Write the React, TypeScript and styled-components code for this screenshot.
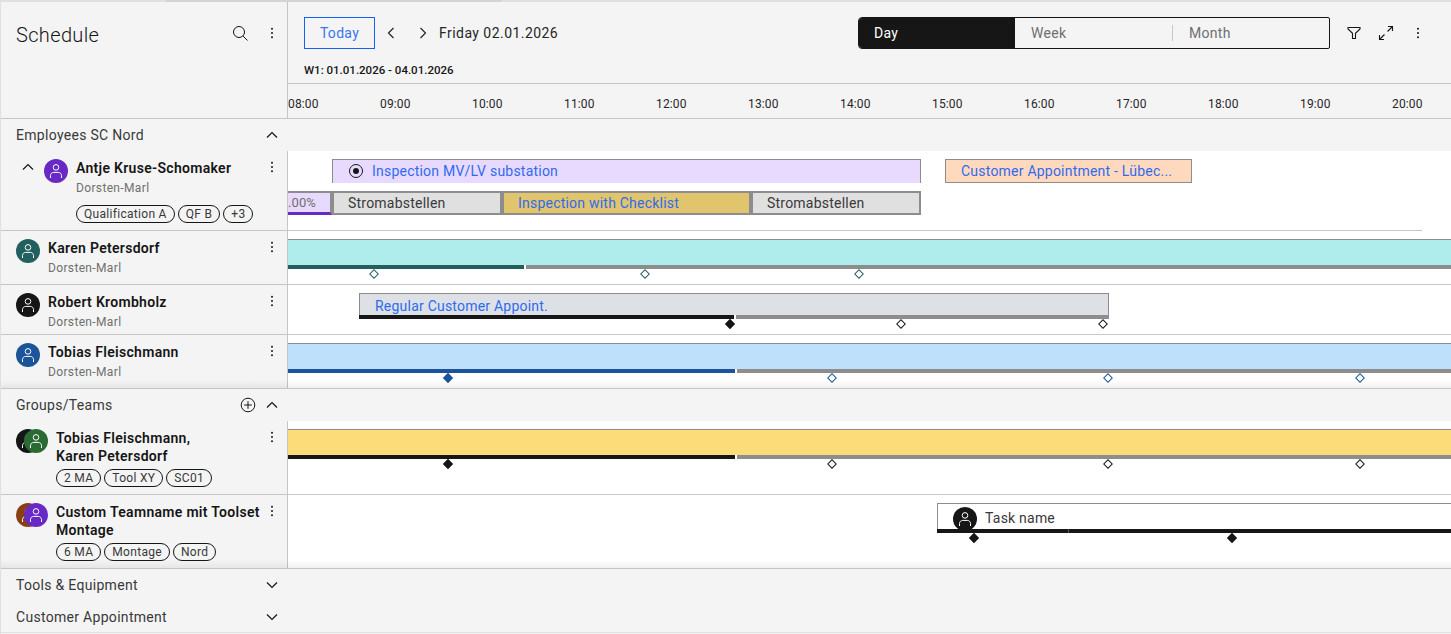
import React from "react";
import styled, { createGlobalStyle } from "styled-components";

const GlobalStyle = createGlobalStyle`
  html, body {
    margin: 0;
    padding: 0;
    background: #f4f4f4;
    overflow: hidden;
  }
  * {
    box-sizing: border-box;
  }
`;

const HOURS = ["08:00", "09:00", "10:00", "11:00", "12:00", "13:00", "14:00", "15:00", "16:00", "17:00", "18:00", "19:00", "20:00"];
const BLACK = "#161616";
const GRAY = "#8d8d8d";
const SIDE_W = 288;

const Page = styled.div`
  width: 1451px;
  height: 634px;
  overflow: hidden;
  display: flex;
  flex-direction: column;
  background: #f4f4f4;
  border-left: 1px solid #e0e0e0;
  font-family: Roboto, "Liberation Sans", sans-serif;
  letter-spacing: 0.3px;
  color: ${BLACK};
`;

const TopEdge = styled.div`
  height: 2px;
  flex: none;
  padding-left: 165px;
  background: #e0e0e0;
`;

const TopStrip = styled.div`
  width: 336px;
  height: 2px;
  background: #d4d4d4;
`;

const Header = styled.header`
  display: flex;
  height: 117px;
  flex: none;
  border-bottom: 1px solid #c6c6c6;
`;

const HeaderSide = styled.div`
  width: ${SIDE_W - 1}px;
  flex: none;
  display: flex;
  justify-content: space-between;
  align-items: flex-start;
  padding: 19px 3px 0 15px;
  border-right: 1px solid #c6c6c6;
`;

const Title = styled.h1`
  margin: 0;
  font-size: 20px;
  line-height: 28px;
  font-weight: 300;
  letter-spacing: 0.35px;
`;

const IconRow = styled.div<{ $ml?: number }>`
  display: flex;
  align-items: center;
  gap: 8px;
  margin-left: ${(p) => p.$ml ?? 0}px;
`;

const IconBtn = styled.span`
  width: 24px;
  height: 24px;
  display: flex;
  align-items: center;
  justify-content: center;
  flex: none;
  color: ${BLACK};
`;

const HeaderMain = styled.div`
  flex: 1;
  min-width: 0;
  display: flex;
  flex-direction: column;
`;

const Toolbar = styled.div`
  height: 82px;
  flex: none;
  border-bottom: 1px solid #c6c6c6;
  padding: 15px 21px 0 16px;
  display: flex;
  flex-direction: column;
`;

const ToolRow = styled.div`
  display: flex;
  align-items: center;
  height: 32px;
`;

const TodayBtn = styled.button`
  width: 71px;
  height: 32px;
  background: transparent;
  border: 1px solid #0f62fe;
  color: #3d75f0;
  font: inherit;
  font-size: 14px;
  letter-spacing: 0.3px;
  padding: 0;
`;

const Nav = styled.span`
  width: 32px;
  height: 32px;
  display: flex;
  align-items: center;
  justify-content: center;
  color: #262626;
`;

const DateLabel = styled.span`
  font-size: 14px;
  color: #262626;
  letter-spacing: 0.45px;
`;

const Switcher = styled.div`
  margin-left: auto;
  width: 472px;
  height: 32px;
  display: grid;
  grid-template-columns: 156px 157px 1fr;
  border: 1px solid ${BLACK};
  border-radius: 4px 2px 2px 4px;
  overflow: hidden;
  font-size: 14px;
`;

const SwitchItem = styled.div<{ $active?: boolean; $divider?: boolean }>`
  display: flex;
  align-items: center;
  padding-left: ${(p) => (p.$divider ? 17 : p.$active ? 15 : 16)}px;
  position: relative;
  background: ${(p) => (p.$active ? BLACK : "transparent")};
  color: ${(p) => (p.$active ? "#ffffff" : "#6f6f6f")};
  &::before {
    content: "";
    display: ${(p) => (p.$divider ? "block" : "none")};
    position: absolute;
    left: 0;
    top: 7px;
    bottom: 7px;
    width: 1px;
    background: #c6c6c6;
  }
`;

const WeekLabel = styled.div`
  font-size: 11.5px;
  font-weight: 500;
  line-height: 16px;
  margin-top: 13px;
  letter-spacing: 0;
`;

const HourRow = styled.div`
  flex: 1;
  display: grid;
  grid-template-columns: repeat(13, 92px);
  align-items: center;
  padding-top: 5px;
  font-size: 12px;
  letter-spacing: 0.15px;
  color: #262626;
`;

const SectionHead = styled.div<{ $last?: boolean }>`
  height: 32px;
  flex: none;
  display: flex;
  align-items: center;
  font-size: 14px;
  color: #393939;
  border-bottom: ${(p) => (p.$last ? "1px solid #e0e0e0" : "none")};
`;

const SectionInner = styled.div`
  width: ${SIDE_W - 1}px;
  display: flex;
  align-items: center;
  padding: 0 4px 0 15px;
`;

const SectionName = styled.span`
  flex: 1;
`;

const Rows = styled.div`
  flex: none;
  position: relative;
  border-bottom: 1px solid #c6c6c6;
  &::after {
    content: "";
    position: absolute;
    left: 0;
    right: 0;
    bottom: 0;
    height: 8px;
    background: linear-gradient(to bottom, rgba(0, 0, 0, 0), rgba(0, 0, 0, 0.06));
    pointer-events: none;
  }
`;

const Row = styled.div<{ $h: number; $line?: boolean }>`
  display: flex;
  height: ${(p) => p.$h}px;
  border-bottom: ${(p) => (p.$line ? "1px solid #c6c6c6" : "none")};
`;

const SideCell = styled.div<{ $line?: boolean }>`
  width: ${SIDE_W - 1}px;
  flex: none;
  display: flex;
  align-items: flex-start;
  border-right: 1px solid #c6c6c6;
  border-bottom: ${(p) => (p.$line ? "1px solid #c6c6c6" : "none")};
  padding: 8px 3px 0 15px;
  position: relative;
`;

const Kebabs = styled(IconBtn)`
  margin-top: -4px;
`;

const Chevron = styled.span`
  width: 24px;
  height: 24px;
  flex: none;
  display: flex;
  align-items: center;
  justify-content: center;
  margin-top: -4px;
  margin-right: 4px;
`;

const Avatar = styled.span<{ $color: string }>`
  width: 24px;
  height: 24px;
  border-radius: 50%;
  background: ${(p) => p.$color};
  color: #ffffff;
  display: flex;
  align-items: center;
  justify-content: center;
  flex: none;
`;

const TaskAvatar = styled(Avatar)`
  margin-top: 4px;
`;

const AvatarStack = styled.div`
  display: flex;
  flex: none;
  & > span + span {
    margin-left: -16px;
  }
`;

const Person = styled.div`
  flex: 1;
  min-width: 0;
  margin-left: 8px;
`;

const Name = styled.div`
  font-size: 14px;
  font-weight: 600;
  line-height: 18px;
  white-space: nowrap;
  letter-spacing: 0.3px;
`;

const Place = styled.div`
  font-size: 12px;
  line-height: 16px;
  color: #6f6f6f;
  margin-top: 3px;
  letter-spacing: 0.35px;
`;

const Chips = styled.div<{ $mt?: number }>`
  display: flex;
  gap: 3px;
  margin-top: ${(p) => p.$mt ?? 4}px;
`;

const Chip = styled.span`
  height: 18px;
  padding: 0 7px;
  border: 1px solid ${BLACK};
  border-radius: 9px;
  display: flex;
  align-items: center;
  font-size: 12px;
  letter-spacing: 0.3px;
  color: #393939;
  white-space: nowrap;
`;

const Track = styled.div`
  flex: 1;
  min-width: 0;
  position: relative;
  background: #ffffff;
  overflow: hidden;
`;

const Bar = styled.div<{ $bg: string; $heavy?: boolean; $openBottom?: boolean; $nudge?: number }>`
  position: absolute;
  background: ${(p) => p.$bg};
  border: ${(p) => (p.$heavy ? 2 : 1)}px solid ${GRAY};
  border-bottom-width: ${(p) => (p.$openBottom ? 0 : p.$heavy ? 2 : 1)}px;
  display: flex;
  align-items: center;
  padding-left: ${(p) => (p.$heavy ? 14 : 15)}px;
  padding-top: ${(p) => Math.max(p.$nudge ?? 0, 0)}px;
  padding-bottom: ${(p) => Math.max(-(p.$nudge ?? 0), 0)}px;
  font-size: 14px;
  white-space: nowrap;
  overflow: hidden;
`;

const Band = styled.div<{ $bg: string }>`
  position: absolute;
  left: 0;
  right: 0;
  height: 26px;
  background: ${(p) => p.$bg};
  border-top: 1px solid ${GRAY};
`;

const BarText = styled.span<{ $link?: boolean }>`
  color: ${(p) => (p.$link ? "#2f6bf0" : "#393939")};
  letter-spacing: 0.22px;
`;

const TaskLabel = styled(BarText)`
  margin: 2px 0 0 8px;
`;

const IconLabel = styled(BarText)`
  margin-left: 8px;
`;

const Thick = styled.div<{ $color: string }>`
  position: absolute;
  height: 4px;
  background: ${(p) => p.$color};
`;

const Diamond = styled.span<{ $color: string; $filled?: boolean }>`
  position: absolute;
  width: 7px;
  height: 7px;
  transform: translate(-50%, -50%) rotate(45deg);
  border: 1px solid ${(p) => p.$color};
  background: ${(p) => (p.$filled ? p.$color : "#ffffff")};
`;

const Percent = styled.div`
  position: absolute;
  overflow: hidden;
  background: #e8daff;
  border-top: 2px solid ${GRAY};
  border-right: 2px solid ${GRAY};
  border-bottom: 3px solid #6929c4;
  font-size: 13px;
  color: #6f6f6f;
  display: flex;
  align-items: center;
  justify-content: flex-end;
  padding-right: 14px;
  letter-spacing: 0.1px;
`;

const Divider = styled.div`
  position: absolute;
  height: 1px;
  background: #c6c6c6;
`;

const UserIcon = () => (
  <svg width="16" height="16" viewBox="0 0 16 16" fill="none" stroke="currentColor" strokeWidth="1">
    <circle cx="8" cy="4.400" r="2.800" />
    <path d="M2.500 15v-2.400c0-1.800 1.400-3.200 3.200-3.200h4.600c1.800 0 3.200 1.400 3.200 3.200V15" />
  </svg>
);

const Kebab = () => (
  <svg width="16" height="16" viewBox="0 0 16 16" fill="currentColor">
    <circle cx="8" cy="3.700" r="1" />
    <circle cx="8" cy="8" r="1" />
    <circle cx="8" cy="12.300" r="1" />
  </svg>
);

const Search = () => (
  <svg width="16" height="16" viewBox="0 0 16 16" fill="none" stroke="currentColor" strokeWidth="1">
    <circle cx="7" cy="7" r="5.500" />
    <path d="M11 11l4.500 4.500" />
  </svg>
);

const Chev = ({ dir }: { dir: "up" | "down" | "left" | "right" }) => {
  const d = {
    up: "M3 10.500L8 5.500l5 5",
    down: "M3 5.500l5 5 5-5",
    left: "M10.500 3L5.500 8l5 5",
    right: "M5.500 3l5 5-5 5",
  }[dir];
  return (
    <svg width="16" height="16" viewBox="0 0 16 16" fill="none" stroke="currentColor" strokeWidth="1.200">
      <path d={d} />
    </svg>
  );
};

const Filter = () => (
  <svg width="16" height="16" viewBox="0 0 16 16" fill="none" stroke="currentColor" strokeWidth="1.100">
    <path d="M2 2.500h12v1.400L9.500 8.300v5.200h-3V8.300L2 3.900z" />
  </svg>
);

const Expand = () => (
  <svg width="16" height="16" viewBox="0 0 16 16" fill="none" stroke="currentColor" strokeWidth="1.100">
    <path d="M10 1.500h4.500V6M14.500 1.500L9.500 6.500M6 14.500H1.500V10M1.500 14.500l5-5" />
  </svg>
);

const AddCircle = () => (
  <svg width="16" height="16" viewBox="0 0 16 16" fill="none" stroke="currentColor" strokeWidth="1">
    <circle cx="8" cy="8" r="6.800" />
    <path d="M8 4.200v7.600M4.200 8h7.600" />
  </svg>
);

type Mark = { x: number; filled?: boolean };

// x values are page coordinates, the track starts at 288
const Timeline = ({ barBg, color, split, marks }: { barBg: string; color: string; split: number; marks: Mark[] }) => (
  <>
    <Band $bg={barBg} style={{ top: 8 }} />
    <Thick $color={color} style={{ left: 0, width: split - 288, top: 34 }} />
    <Thick $color={GRAY} style={{ left: split - 286, right: 0, top: 34 }} />
    {marks.map((m) => (
      <Diamond key={m.x} $color={color} $filled={m.filled} style={{ left: m.x - 288, top: 43 }} />
    ))}
  </>
);

const Rowside = ({ name, color }: { name: string; color: string }) => (
  <SideCell>
    <Avatar $color={color}><UserIcon /></Avatar>
    <Person>
      <Name>{name}</Name>
      <Place>Dorsten-Marl</Place>
    </Person>
    <Kebabs><Kebab /></Kebabs>
  </SideCell>
);

export default function App() {
  return (
    <Page>
      <GlobalStyle />
      <TopEdge>
        <TopStrip />
      </TopEdge>
      <Header>
        <HeaderSide>
          <Title>Schedule</Title>
          <IconRow>
            <IconBtn><Search /></IconBtn>
            <IconBtn><Kebab /></IconBtn>
          </IconRow>
        </HeaderSide>
        <HeaderMain>
          <Toolbar>
            <ToolRow>
              <TodayBtn>Today</TodayBtn>
              <Nav><Chev dir="left" /></Nav>
              <Nav><Chev dir="right" /></Nav>
              <DateLabel>Friday 02.01.2026</DateLabel>
              <Switcher>
                <SwitchItem $active>Day</SwitchItem>
                <SwitchItem>Week</SwitchItem>
                <SwitchItem $divider>Month</SwitchItem>
              </Switcher>
              <IconRow $ml={12}>
                <IconBtn><Filter /></IconBtn>
                <IconBtn><Expand /></IconBtn>
                <IconBtn><Kebab /></IconBtn>
              </IconRow>
            </ToolRow>
            <WeekLabel>W1: 01.01.2026 - 04.01.2026</WeekLabel>
          </Toolbar>
          <HourRow>
            {HOURS.map((h) => (
              <span key={h}>{h}</span>
            ))}
          </HourRow>
        </HeaderMain>
      </Header>

      <SectionHead>
        <SectionInner>
          <SectionName>Employees SC Nord</SectionName>
          <IconBtn><Chev dir="up" /></IconBtn>
        </SectionInner>
      </SectionHead>
      <Rows>
        <Row $h={80}>
          <SideCell $line>
            <Chevron><Chev dir="up" /></Chevron>
            <Avatar $color="#6929c4"><UserIcon /></Avatar>
            <Person>
              <Name>Antje Kruse-Schomaker</Name>
              <Place>Dorsten-Marl</Place>
              <Chips $mt={9}>
                <Chip>Qualification A</Chip>
                <Chip>QF B</Chip>
                <Chip>+3</Chip>
              </Chips>
            </Person>
            <Kebabs><Kebab /></Kebabs>
          </SideCell>
          <Track>
            <Bar $bg="#e8daff" $openBottom $nudge={-2} style={{ left: 44, width: 589, top: 8, height: 24 }}>
              <svg width="16" height="16" viewBox="0 0 16 16" fill="none" stroke="#161616" strokeWidth="1">
                <circle cx="8" cy="8" r="6.500" />
                <circle cx="8" cy="8" r="3" fill="#161616" stroke="none" />
              </svg>
              <IconLabel $link>Inspection MV/LV substation</IconLabel>
            </Bar>
            <Bar $bg="#ffd9be" style={{ left: 657, width: 247, top: 8, height: 24 }}>
              <BarText $link>Customer Appointment - Lübec...</BarText>
            </Bar>
            <Percent style={{ left: 0, width: 44, top: 40, height: 24 }}>.00%</Percent>
            <Bar $heavy $bg="#e0e0e0" style={{ left: 44, width: 170, top: 40, height: 24 }}>
              <BarText>Stromabstellen</BarText>
            </Bar>
            <Bar $heavy $bg="#e0c56c" style={{ left: 214, width: 249, top: 40, height: 24 }}>
              <BarText $link>Inspection with Checklist</BarText>
            </Bar>
            <Bar $heavy $bg="#e0e0e0" style={{ left: 463, width: 170, top: 40, height: 24 }}>
              <BarText>Stromabstellen</BarText>
            </Bar>
            <Divider style={{ left: 0, width: 1134, top: 79 }} />
          </Track>
        </Row>
        <Row $h={54} $line>
          <Rowside name="Karen Petersdorf" color="#225f5f" />
          <Track>
            <Timeline barBg="#afecec" color="#225f5f" split={524} marks={[{ x: 374 }, { x: 645 }, { x: 859 }]} />
          </Track>
        </Row>
        <Row $h={50} $line>
          <Rowside name="Robert Krombholz" color={BLACK} />
          <Track>
            <Bar $bg="#dde0e5" $openBottom $nudge={2} style={{ left: 71, width: 750, top: 8, height: 22 }}>
              <BarText $link>Regular Customer Appoint.</BarText>
            </Bar>
            <Thick $color={BLACK} style={{ left: 71, width: 375, top: 30 }} />
            <Thick $color={GRAY} style={{ left: 448, width: 373, top: 30 }} />
            <Diamond $color={BLACK} $filled style={{ left: 442, top: 39 }} />
            <Diamond $color={BLACK} style={{ left: 613, top: 39 }} />
            <Diamond $color={BLACK} style={{ left: 815, top: 39 }} />
          </Track>
        </Row>
        <Row $h={53}>
          <Rowside name="Tobias Fleischmann" color="#1c5499" />
          <Track>
            <Timeline barBg="#bfe0fa" color="#1c5499" split={735} marks={[{ x: 448, filled: true }, { x: 832 }, { x: 1108 }, { x: 1360 }]} />
          </Track>
        </Row>
      </Rows>

      <SectionHead>
        <SectionInner>
          <SectionName>Groups/Teams</SectionName>
          <IconBtn><AddCircle /></IconBtn>
          <IconBtn><Chev dir="up" /></IconBtn>
        </SectionInner>
      </SectionHead>
      <Rows>
        <Row $h={74} $line>
          <SideCell>
            <AvatarStack>
              <Avatar $color={BLACK}><UserIcon /></Avatar>
              <Avatar $color="#2a6a33"><UserIcon /></Avatar>
            </AvatarStack>
            <Person>
              <Name>Tobias Fleischmann,<br />Karen Petersdorf</Name>
              <Chips>
                <Chip>2 MA</Chip>
                <Chip>Tool XY</Chip>
                <Chip>SC01</Chip>
              </Chips>
            </Person>
            <Kebabs><Kebab /></Kebabs>
          </SideCell>
          <Track>
            <Timeline barBg="#fbdc79" color={BLACK} split={735} marks={[{ x: 448, filled: true }, { x: 832 }, { x: 1108 }, { x: 1360 }]} />
          </Track>
        </Row>
        <Row $h={73}>
          <SideCell>
            <AvatarStack>
              <Avatar $color="#8a3f12"><UserIcon /></Avatar>
              <Avatar $color="#6929c4"><UserIcon /></Avatar>
            </AvatarStack>
            <Person>
              <Name>Custom Teamname mit Toolset<br />Montage</Name>
              <Chips>
                <Chip>6 MA</Chip>
                <Chip>Montage</Chip>
                <Chip>Nord</Chip>
              </Chips>
            </Person>
            <Kebabs><Kebab /></Kebabs>
          </SideCell>
          <Track>
            <Bar $bg="#ffffff" $openBottom style={{ left: 649, right: -4, top: 8, height: 26 }}>
              <TaskAvatar $color={BLACK}><UserIcon /></TaskAvatar>
              <TaskLabel>Task name</TaskLabel>
            </Bar>
            <Thick $color={BLACK} style={{ left: 649, width: 131, top: 34 }} />
            <Thick $color="#525252" style={{ left: 780, width: 1, top: 34 }} />
            <Thick $color={BLACK} style={{ left: 781, right: 0, top: 34 }} />
            <Diamond $color={BLACK} $filled style={{ left: 686, top: 43 }} />
            <Diamond $color={BLACK} $filled style={{ left: 944, top: 43 }} />
          </Track>
        </Row>
      </Rows>

      <SectionHead>
        <SectionInner>
          <SectionName>Tools &amp; Equipment</SectionName>
          <IconBtn><Chev dir="down" /></IconBtn>
        </SectionInner>
      </SectionHead>
      <SectionHead $last>
        <SectionInner>
          <SectionName>Customer Appointment</SectionName>
          <IconBtn><Chev dir="down" /></IconBtn>
        </SectionInner>
      </SectionHead>
    </Page>
  );
}
